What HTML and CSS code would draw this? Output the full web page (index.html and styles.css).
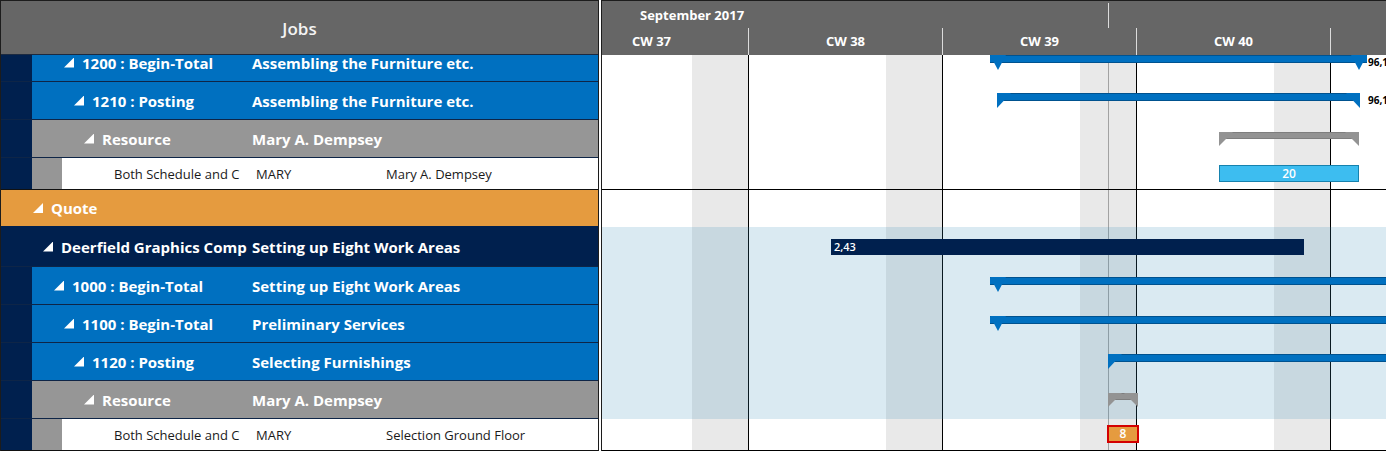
FILE: index.html
```html
<!DOCTYPE html>
<html>
<head>
<meta charset="utf-8">
<link rel="stylesheet" href="styles.css">
</head>
<body>
<div class="app">
  <div class="left">
    <div class="lhead">Jobs</div>
    <div class="lbody">
      <div class="rows">
        <div class="lrow blue"><div class="c1 l3"><span class="tri"></span>1200 : Begin-Total</div><div class="c2">Assembling the Furniture etc.</div></div>
        <div class="lrow blue"><div class="c1 l4"><span class="tri"></span>1210 : Posting</div><div class="c2">Assembling the Furniture etc.</div></div>
        <div class="lrow gray"><div class="c1 l5"><span class="tri"></span>Resource</div><div class="c2">Mary A. Dempsey</div></div>
        <div class="lrow white h32"><div class="c1 plain">Both Schedule and C</div><div class="c2">MARY</div><div class="c3">Mary A. Dempsey</div></div>
        <div class="lrow orange h37"><div class="c1 l0"><span class="tri"></span>Quote</div></div>
        <div class="lrow navy h40"><div class="c1 l1"><span class="tri"></span>Deerfield Graphics Comp</div><div class="c2">Setting up Eight Work Areas</div></div>
        <div class="lrow blue"><div class="c1 l2"><span class="tri"></span>1000 : Begin-Total</div><div class="c2">Setting up Eight Work Areas</div></div>
        <div class="lrow blue"><div class="c1 l3"><span class="tri"></span>1100 : Begin-Total</div><div class="c2">Preliminary Services</div></div>
        <div class="lrow blue"><div class="c1 l4"><span class="tri"></span>1120 : Posting</div><div class="c2">Selecting Furnishings</div></div>
        <div class="lrow gray"><div class="c1 l5"><span class="tri"></span>Resource</div><div class="c2">Mary A. Dempsey</div></div>
        <div class="lrow white h32"><div class="c1 plain">Both Schedule and C</div><div class="c2">MARY</div><div class="c3">Selection Ground Floor</div></div>
      </div>
    </div>
  </div>
  <div class="chart">
    <div class="chead">
      <div class="months">
        <div class="month first">September 2017</div>
        <div class="month next"></div>
      </div>
      <div class="weeks">
        <div class="wk">CW 37</div>
        <div class="wk">CW 38</div>
        <div class="wk">CW 39</div>
        <div class="wk">CW 40</div>
        <div class="wk"></div>
      </div>
    </div>
    <div class="cbody">
      <div class="today"></div>
      <div class="crows">
        <div class="crow">
          <div class="bar sum tot" style="left:388px;width:377px"></div>
          <div class="lbl" style="left:766px">96,15</div>
        </div>
        <div class="crow">
          <div class="bar sum post" style="left:395px;width:363px"></div>
          <div class="lbl" style="left:766px">96,15</div>
        </div>
        <div class="crow">
          <div class="bar sum post res" style="left:617px;width:140px"></div>
        </div>
        <div class="crow h32 sep">
          <div class="bar work" style="left:617px;width:140px">20</div>
        </div>
        <div class="crow h37"></div>
        <div class="crow h40 band">
          <div class="bar job" style="left:229px;width:473px">2,43</div>
        </div>
        <div class="crow band">
          <div class="bar sum tot t10" style="left:388px;width:1000px"></div>
        </div>
        <div class="crow band">
          <div class="bar sum tot" style="left:388px;width:1000px"></div>
        </div>
        <div class="crow band">
          <div class="bar sum post" style="left:506px;width:1000px"></div>
        </div>
        <div class="crow band">
          <div class="bar sum post res" style="left:506px;width:30px"></div>
        </div>
        <div class="crow h32 sep">
          <div class="bar warn" style="left:505px;width:32px">8</div>
        </div>
      </div>
    </div>
  </div>
</div>
</body>
</html>
```

FILE: styles.css
```css
* { box-sizing: border-box; margin: 0; padding: 0; }

body {
  width: 1386px;
  height: 453px;
  overflow: hidden;
  background: #fff;
  font-family: "Open Sans", "Noto Sans", "Liberation Sans", sans-serif;
}

.app {
  display: flex;
  height: 451px;
}

/* ---------- left grid ---------- */
.left {
  width: 599px;
  flex: none;
  border: 1px solid #1c1c1c;
  border-bottom: none;
  margin-right: 2px;
  display: flex;
  flex-direction: column;
}

.lhead {
  height: 54px;
  flex: none;
  background: #666;
  border-bottom: 1px solid #1c2a40;
  color: #f4f4f4;
  font-size: 17px;
  font-weight: 600;
  text-align: center;
  line-height: 50px;
  padding-top: 3px;
}

.lbody {
  height: 396px;
  overflow: hidden;
}

.rows { margin-top: -11px; }

.lrow {
  height: 38px;
  display: grid;
  grid-template-columns: 247px 138px 1fr;
  align-items: center;
  border-bottom: 1px solid #0e2547;
  color: #fff;
  font-size: 15px;
  font-weight: 700;
  white-space: nowrap;
}

.lrow.h32 { height: 32px; }
.lrow.h37 { height: 37px; }
.lrow.h40 { height: 40px; }

.blue { background: linear-gradient(90deg, #00204e 0 31px, #0070c0 31px); }
.gray { background: linear-gradient(90deg, #00204e 0 31px, #969696 31px); }
.white {
  background: linear-gradient(90deg, #00204e 0 31px, #969696 31px 61px, #fff 61px);
  color: #1a1a1a;
  font-size: 13px;
  font-weight: 400;
  border-bottom-color: #111;
}
.orange { background: #e59b3f; border-bottom-color: #00204e; }
.navy { background: #00204e; }

.c1 {
  overflow: hidden;
  display: flex;
  align-items: center;
}
.c2 { padding-left: 4px; overflow: hidden; grid-column: 2 / 4; }
.white .c2 { padding-left: 8px; grid-column: 2 / 3; }
.c3 { overflow: hidden; }

.l0 { padding-left: 32px; }
.l1 { padding-left: 42px; }
.l2 { padding-left: 53px; }
.l3 { padding-left: 63px; }
.l4 { padding-left: 73px; }
.l5 { padding-left: 83px; }
.plain { padding-left: 113px; }

.tri {
  flex: none;
  width: 10px;
  height: 10px;
  margin-right: 8px;
  background: #fff;
  clip-path: polygon(100% 0, 100% 100%, 0 100%);
}

/* ---------- chart ---------- */
.chart {
  flex: 1;
  min-width: 0;
  overflow: hidden;
  border-top: 1px solid #1c1c1c;
  border-left: 1px solid #1c1c1c;
  display: flex;
  flex-direction: column;
}

.chead {
  height: 54px;
  flex: none;
  background: #666;
  color: #fff;
  font-size: 13px;
  font-weight: 700;
  overflow: hidden;
}

.months {
  display: flex;
  height: 27px;
}
.month.first {
  width: 506px;
  flex: none;
  padding-left: 38px;
  padding-top: 2px;
  line-height: 25px;
}
.month.next {
  flex: 1;
  margin-top: 2px;
  border-left: 1px solid #dcdcdc;
}

.weeks {
  display: flex;
  height: 27px;
  margin-left: -48px;
}
.wk {
  width: 194px;
  flex: none;
  text-align: center;
  line-height: 27px;
  border-left: 1px solid #dcdcdc;
}

.cbody {
  position: relative;
  height: 396px;
  overflow: hidden;
  background-image: linear-gradient(90deg, #fff 0 137px, #e9e9e9 137px 193px, #000 193px 194px);
  background-size: 194px 100%;
  background-position: 147px 0;
}

.today {
  position: absolute;
  left: 506px;
  top: 0;
  bottom: 0;
  width: 1px;
  background: #a2a2a2;
}

.crows { margin-top: -11px; }

.crow {
  position: relative;
  height: 38px;
  border-bottom: 1px solid transparent;
}
.crow.h32 { height: 32px; }
.crow.h37 { height: 37px; }
.crow.h40 { height: 40px; }
.crow.sep { border-bottom-color: #000; }
.crow.band { background: rgba(50, 139, 183, 0.18); }

.bar { position: absolute; }

.sum {
  top: 11px;
  height: 8px;
  background: #0070c0;
  border-top: 1px solid #00528f;
  border-bottom: 1px solid #00528f;
}
.sum.t10 { top: 10px; }
.sum::before,
.sum::after {
  content: "";
  position: absolute;
  top: -1px;
  width: 14px;
  height: 15px;
  background: #0070c0;
}
.post::before { left: 0; clip-path: polygon(0 0, 100% 0, 0 100%); }
.post::after { right: 0; clip-path: polygon(0 0, 100% 0, 100% 100%); }
.tot::before { left: 0; width: 16px; clip-path: polygon(0 0, 100% 0, 50% 100%); }
.tot::after { right: 0; width: 16px; clip-path: polygon(0 0, 100% 0, 50% 100%); }

.res {
  top: 12px;
  height: 7px;
  background: #939393;
  border-color: #7e7e7e;
}
.res::before,
.res::after {
  height: 14px;
  background: #939393;
}

.work {
  top: 7px;
  height: 17px;
  background: #3dbdf0;
  border: 1px solid #1682ae;
  color: #fff;
  font-size: 12px;
  font-weight: 600;
  text-align: center;
  line-height: 15px;
}

.job {
  top: 12px;
  height: 16px;
  background: #00204e;
  color: #fff;
  font-size: 11px;
  font-weight: 600;
  line-height: 16px;
  padding-left: 3px;
}

.warn {
  top: 6px;
  height: 18px;
  background: #e59b3f;
  border: 2px solid #d40000;
  color: #fff;
  font-size: 12px;
  font-weight: 600;
  text-align: center;
  line-height: 14px;
}

.lbl {
  position: absolute;
  top: 12px;
  font-size: 10px;
  font-weight: 700;
  line-height: 12px;
  color: #000;
  white-space: nowrap;
}
```
